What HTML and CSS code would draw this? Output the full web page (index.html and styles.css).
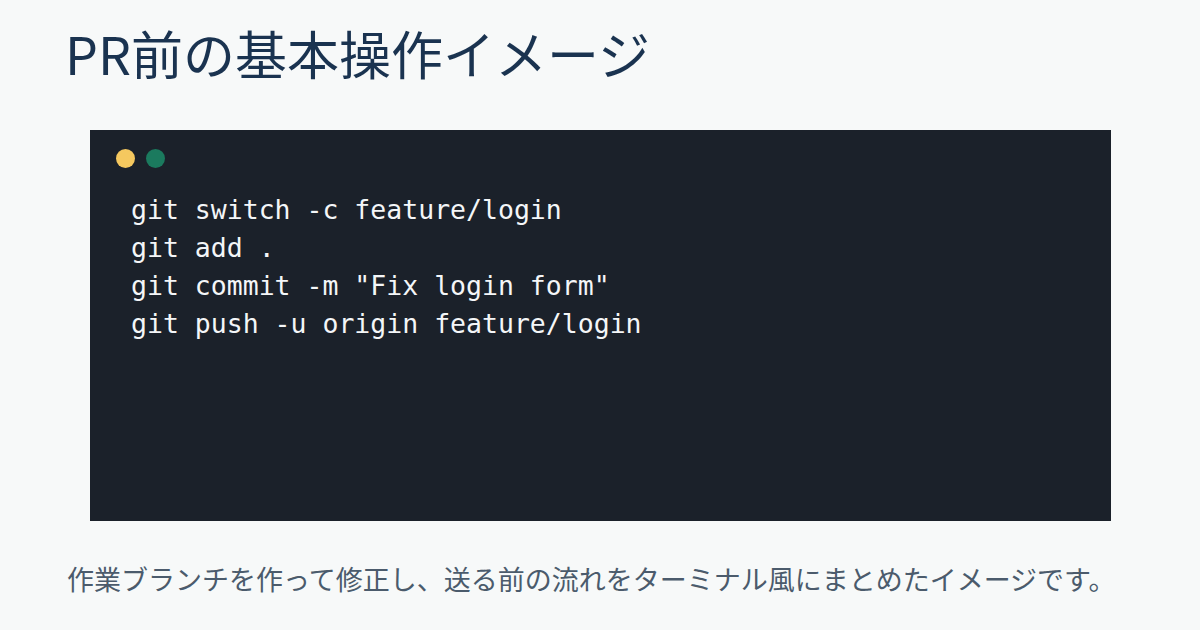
FILE: index.html
```html
<!DOCTYPE html>
<html lang="ja">
<head>
<meta charset="utf-8">
<link rel="stylesheet" href="styles.css">
</head>
<body>
<div class="page">
  <h1 class="title">PR前の基本操作イメージ</h1>
  <div class="terminal">
    <div class="dots">
      <span class="dot dot-yellow"></span>
      <span class="dot dot-green"></span>
    </div>
    <pre class="code">git switch -c feature/login
git add .
git commit -m "Fix login form"
git push -u origin feature/login</pre>
  </div>
  <p class="caption">作業ブランチを作って修正し、送る前の流れをターミナル風にまとめたイメージです。</p>
</div>
</body>
</html>
```

FILE: styles.css
```css
html, body {
  margin: 0;
  padding: 0;
  background: #f7f9f9;
}
.page {
  width: 1200px;
  height: 630px;
  box-sizing: border-box;
  padding: 22px 89px 0 65px;
  display: flex;
  flex-direction: column;
  font-family: "Noto Sans CJK JP", sans-serif;
}
.title {
  margin: 0;
  font-size: 52px;
  font-weight: 400;
  line-height: 62px;
  color: #1a3350;
}
.terminal {
  flex-shrink: 0;
  margin: 46px 0 0 25px;
  height: 391px;
  box-sizing: border-box;
  background: #1b212a;
  padding: 19px 26px;
}
.dots {
  display: flex;
  gap: 11px;
}
.dot {
  width: 19px;
  height: 19px;
  border-radius: 50%;
}
.dot-yellow { background: #f5c85f; }
.dot-green { background: #1b7a5e; }
.code {
  margin: 23px 0 0 15px;
  font-family: "DejaVu Sans Mono", monospace;
  font-size: 26.5px;
  line-height: 38px;
  color: #f4f6f8;
}
.caption {
  margin: 39px -60px 0 2px;
  white-space: nowrap;
  font-size: 27px;
  line-height: 38px;
  color: #4b5b6c;
}
```
